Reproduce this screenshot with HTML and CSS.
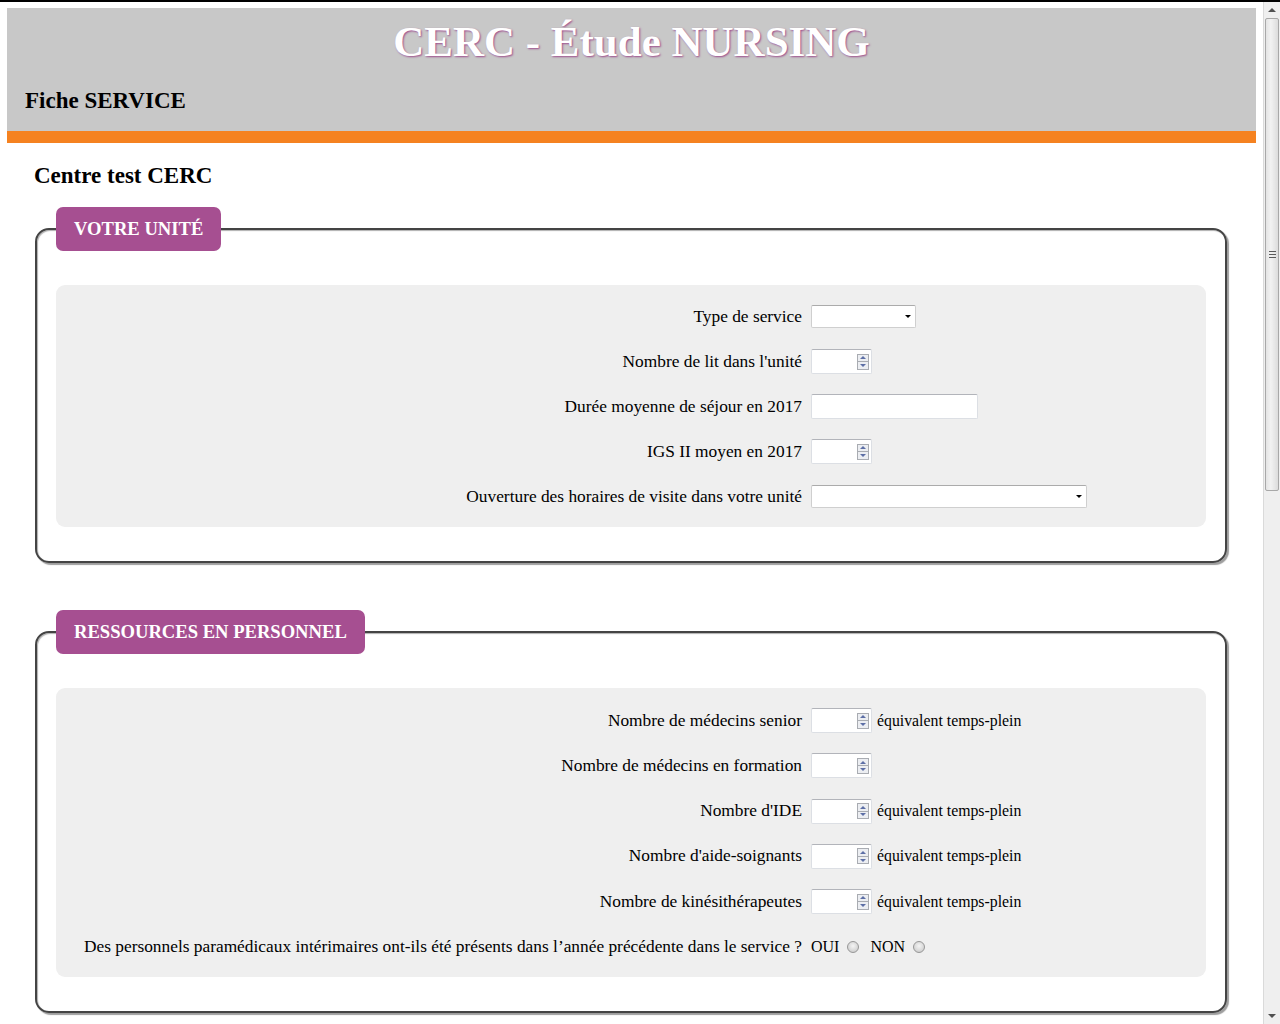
FILE: index.html
```html
<!DOCTYPE html>
<html lang="fr">
<head>
<meta charset="utf-8">
<title>CERC - Étude NURSING</title>
<link rel="stylesheet" href="styles.css">
</head>
<body>
<div class="page">
  <header class="banner">
    <h1 class="title">CERC - Étude NURSING</h1>
    <h2 class="subtitle">Fiche SERVICE</h2>
  </header>
  <div class="accent"></div>
  <main class="content">
    <h2 class="centre">Centre test CERC</h2>

    <fieldset class="box">
      <legend class="tag">VOTRE UNITÉ</legend>
      <div class="panel">
        <div class="row">
          <label class="lbl">Type de service</label>
          <span class="sel sel-sm"><select><option></option></select><span class="caret"></span></span>
        </div>
        <div class="row">
          <label class="lbl">Nombre de lit dans l'unité</label>
          <span class="num"><input type="number"><span class="spin"><i class="up"></i><i class="down"></i></span></span>
        </div>
        <div class="row">
          <label class="lbl">Durée moyenne de séjour en 2017</label>
          <input class="txt" type="text">
        </div>
        <div class="row">
          <label class="lbl">IGS II moyen en 2017</label>
          <span class="num"><input type="number"><span class="spin"><i class="up"></i><i class="down"></i></span></span>
        </div>
        <div class="row">
          <label class="lbl">Ouverture des horaires de visite dans votre unité</label>
          <span class="sel sel-lg"><select><option></option></select><span class="caret"></span></span>
        </div>
      </div>
    </fieldset>

    <fieldset class="box">
      <legend class="tag">RESSOURCES EN PERSONNEL</legend>
      <div class="panel panel-b">
        <div class="row">
          <label class="lbl">Nombre de médecins senior</label>
          <span class="num"><input type="number"><span class="spin"><i class="up"></i><i class="down"></i></span></span>
          <span class="unit">équivalent temps-plein</span>
        </div>
        <div class="row">
          <label class="lbl">Nombre de médecins en formation</label>
          <span class="num"><input type="number"><span class="spin"><i class="up"></i><i class="down"></i></span></span>
        </div>
        <div class="row">
          <label class="lbl">Nombre d'IDE</label>
          <span class="num"><input type="number"><span class="spin"><i class="up"></i><i class="down"></i></span></span>
          <span class="unit">équivalent temps-plein</span>
        </div>
        <div class="row">
          <label class="lbl">Nombre d'aide-soignants</label>
          <span class="num"><input type="number"><span class="spin"><i class="up"></i><i class="down"></i></span></span>
          <span class="unit">équivalent temps-plein</span>
        </div>
        <div class="row">
          <label class="lbl">Nombre de kinésithérapeutes</label>
          <span class="num"><input type="number"><span class="spin"><i class="up"></i><i class="down"></i></span></span>
          <span class="unit">équivalent temps-plein</span>
        </div>
        <div class="row">
          <label class="lbl">Des personnels paramédicaux intérimaires ont-ils été présents dans l’année précédente dans le service ?</label>
          <span class="radios">
            <span class="opt">OUI</span><input class="rad" type="radio" name="interim">
            <span class="opt opt-2">NON</span><input class="rad" type="radio" name="interim">
          </span>
        </div>
      </div>
    </fieldset>
  </main>
</div>

<div class="vscroll" aria-hidden="true">
  <div class="sb-btn"><span class="sb-up"></span></div>
  <div class="sb-thumb"><span class="grip"></span></div>
  <div class="sb-track"></div>
  <div class="sb-btn"><span class="sb-down"></span></div>
</div>
</body>
</html>
```

FILE: styles.css
```css
html, body {
  margin: 0;
  padding: 0;
  background: #fff;
}

body {
  border-top: 2px solid #000;
  font-family: "Liberation Serif", "Times New Roman", serif;
  color: #000;
}

.page {
  padding: 6px 24px 40px 7px;
}

/* ---------- Banner ---------- */
.banner {
  background: #c8c8c8;
  padding: 9px 18px 17px;
}

.title {
  margin: 0;
  text-align: center;
  font-size: 43px;
  line-height: 50px;
  font-weight: bold;
  color: #fff;
  text-shadow: 1px 1px 2px #9c4d8c;
}

.subtitle {
  margin: 20px 0 0;
  font-size: 23px;
  line-height: 28px;
  font-weight: bold;
}

.banner .subtitle {
  margin-bottom: -1px;
}

.accent {
  height: 12px;
  background: #f58220;
}

/* ---------- Content ---------- */
.content {
  padding: 0 29px 0 28px;
}

.centre {
  margin: 19px 0 0 -1px;
  font-size: 23px;
  line-height: 28px;
  font-weight: bold;
}

.box {
  margin: 17px 0 0;
  padding: 34px 19px;
  min-width: 0;
  border: 2px solid #444;
  border-radius: 14px;
  box-shadow: 2px 2px 1px #9e9e9e, inset 1px 1px 1px #b0b0b0;
}

.box + .box {
  margin-top: 47px;
}

.tag {
  background: #a64f91;
  color: #fff;
  font-size: 18.6px;
  line-height: 20px;
  font-weight: bold;
  padding: 12px 18px;
  border-radius: 7px;
}

.panel {
  background: #efefef;
  border-radius: 9px;
  padding: 9px 0 8px;
}

.panel-b {
  padding: 10px 0 7.5px;
}

.row {
  display: flex;
  align-items: center;
  height: 45px;
}

.panel-b .row {
  height: 45.25px;
}

.lbl {
  flex: none;
  width: 746px;
  margin-right: 9px;
  text-align: right;
  font-size: 17.35px;
}

.unit {
  margin-left: 5px;
  font-size: 15.8px;
}

/* ---------- Controls ---------- */
.sel {
  position: relative;
  display: inline-block;
}

.sel select {
  -webkit-appearance: none;
  appearance: none;
  display: block;
  box-sizing: border-box;
  height: 23px;
  margin: 0;
  padding: 0 4px;
  background: #fff;
  border: 1px solid #cfcfcf;
  border-top-color: #ababab;
  border-radius: 2px;
  font-family: inherit;
  font-size: 15px;
}

.sel-sm select {
  width: 105px;
}

.sel-lg select {
  width: 276px;
}

.caret {
  position: absolute;
  right: 5px;
  top: 10px;
  width: 0;
  height: 0;
  border-left: 3.5px solid transparent;
  border-right: 3.5px solid transparent;
  border-top: 3.5px solid #000;
}

.num {
  display: inline-flex;
  align-items: center;
  box-sizing: border-box;
  width: 61px;
  height: 25px;
  padding-right: 2px;
  background: #fff;
  border: 1px solid #dcdfe4;
  border-top-color: #b2b4ba;
  border-radius: 2px;
}

.num input {
  flex: 1;
  min-width: 0;
  height: 100%;
  margin: 0;
  padding: 0 3px;
  border: 0;
  outline: 0;
  background: transparent;
  font-family: inherit;
  font-size: 15px;
  -moz-appearance: textfield;
}

.num input::-webkit-inner-spin-button,
.num input::-webkit-outer-spin-button {
  -webkit-appearance: none;
  margin: 0;
}

.spin {
  display: flex;
  flex-direction: column;
  width: 12px;
  height: 16px;
  box-sizing: border-box;
  border: 1px solid #a9acb2;
  background: #eceef2;
}

.spin i {
  flex: 1;
  display: flex;
  align-items: center;
  justify-content: center;
}

.spin i + i {
  border-top: 1px solid #a9acb2;
}

.spin .up::before,
.spin .down::before {
  content: "";
  width: 0;
  height: 0;
  border-left: 3px solid transparent;
  border-right: 3px solid transparent;
}

.spin .up::before {
  border-bottom: 3px solid #5d6fa6;
}

.spin .down::before {
  border-top: 3px solid #5d6fa6;
}

.txt {
  box-sizing: border-box;
  width: 167px;
  height: 25px;
  margin: 0;
  padding: 0 3px;
  background: #fff;
  border: 1px solid #dcdfe4;
  border-top-color: #b2b4ba;
  border-radius: 2px;
  font-family: inherit;
  font-size: 15px;
  outline: 0;
}

.radios {
  display: inline-flex;
  align-items: center;
  font-size: 16px;
}

.opt-2 {
  margin-left: 11px;
}

.rad {
  -webkit-appearance: none;
  appearance: none;
  box-sizing: border-box;
  width: 12px;
  height: 12px;
  margin: 0 0 0 8px;
  border: 1px solid #979797;
  border-radius: 50%;
  background: radial-gradient(circle at 50% 40%, #f4f4f4 0%, #dadada 55%, #c4c4c4 100%);
}

/* ---------- Window scrollbar ---------- */
.vscroll {
  position: fixed;
  top: 2px;
  right: 0;
  bottom: 0;
  width: 17px;
  box-sizing: border-box;
  display: flex;
  flex-direction: column;
  background: #efefef;
  border-left: 1px solid #dadada;
}

.sb-btn {
  flex: none;
  height: 16px;
  display: flex;
  align-items: center;
  justify-content: center;
}

.sb-up,
.sb-down {
  width: 0;
  height: 0;
  border-left: 4px solid transparent;
  border-right: 4px solid transparent;
}

.sb-up {
  border-bottom: 4px solid #505050;
}

.sb-down {
  border-top: 4px solid #505050;
}

.sb-thumb {
  flex: none;
  height: 473px;
  margin: 0 1px 0 1px;
  box-sizing: border-box;
  border: 1px solid #a8a8a8;
  border-radius: 2px;
  background: linear-gradient(to right, #e4e4e4 0%, #f2f2f2 40%, #dcdcdc 100%);
  display: flex;
  align-items: center;
  justify-content: center;
}

.grip {
  width: 7px;
  height: 7px;
  background: repeating-linear-gradient(to bottom, #5a5a5a 0, #5a5a5a 1px, transparent 1px, transparent 3px);
}

.sb-track {
  flex: 1;
}
```
